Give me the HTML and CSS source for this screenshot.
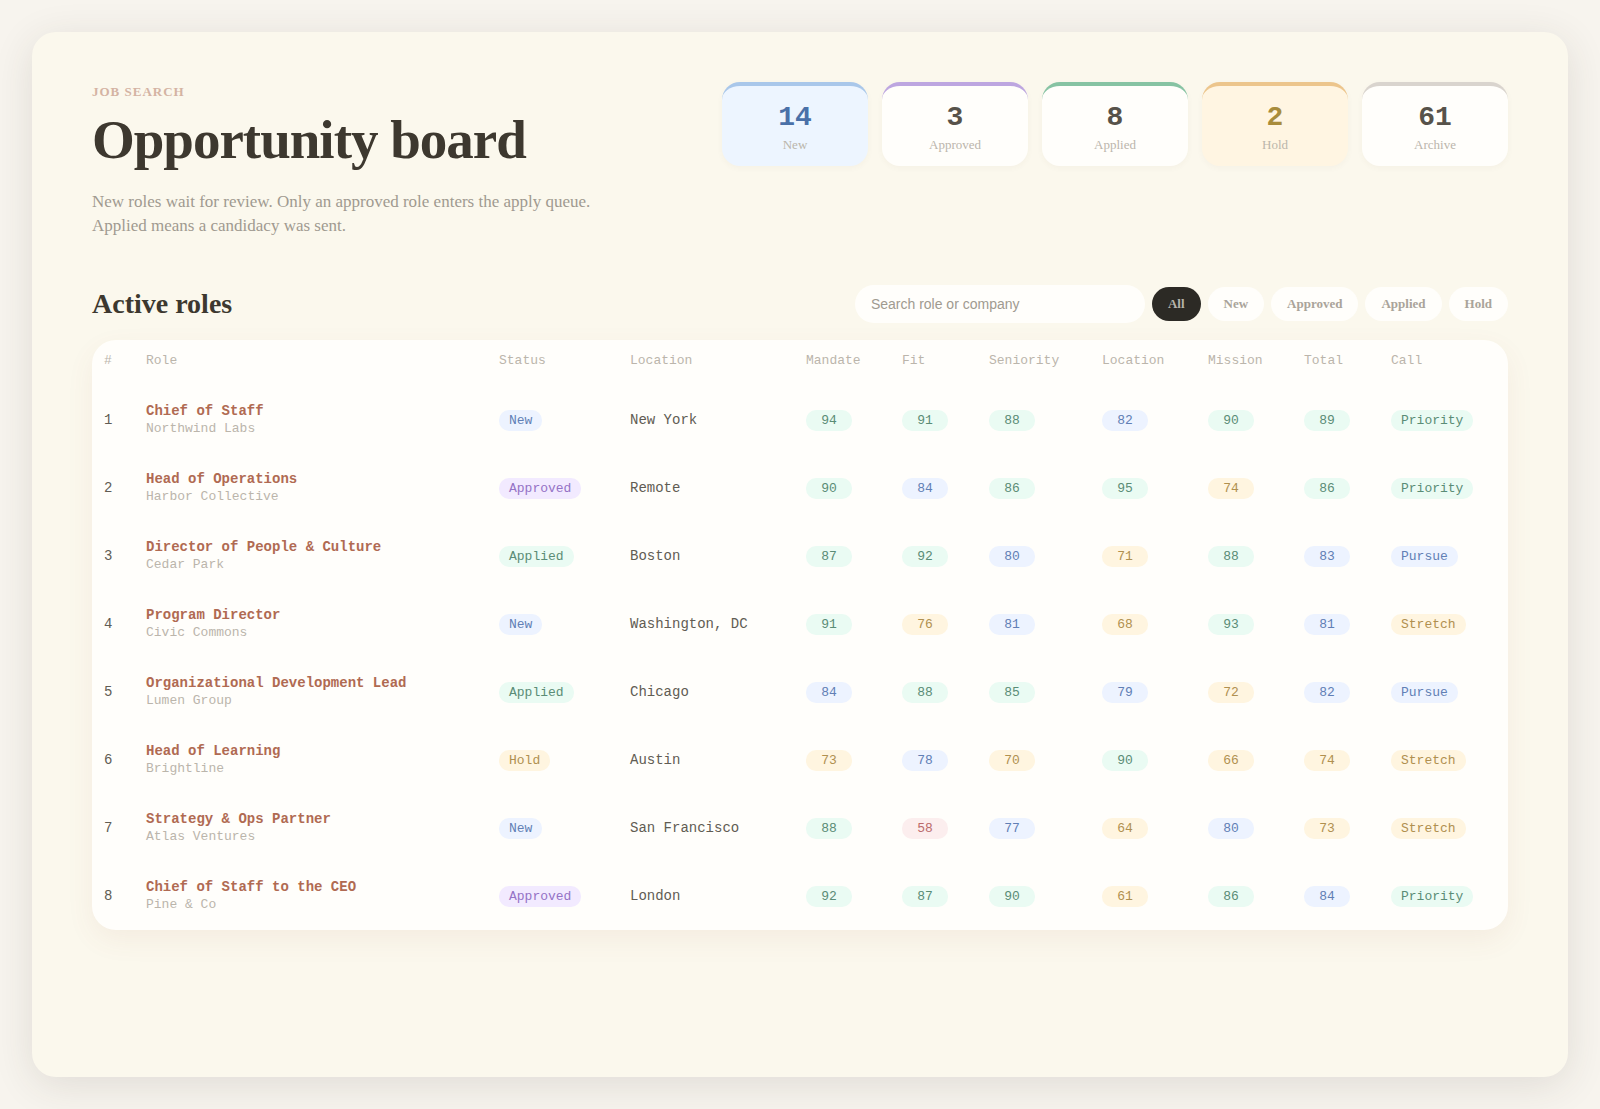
FILE: index.html
```
<!DOCTYPE html>
<html lang="en">
<head>
    <meta charset="UTF-8">
    <meta name="viewport" content="width=device-width, initial-scale=1.0">
    <title>Opportunity board</title>
    <link rel="stylesheet" href="styles.css">
</head>
<body>
    <main class="board">
        <header class="board-header">
            <div class="intro">
                <p class="eyebrow">Job search</p>
                <h1>Opportunity board</h1>
                <p class="lead">New roles wait for review. Only an approved role enters the apply queue. Applied means a candidacy was sent.</p>
            </div>
            <div class="stats">
                <div class="stat stat-new"><strong>14</strong><span>New</span></div>
                <div class="stat stat-approved"><strong>3</strong><span>Approved</span></div>
                <div class="stat stat-applied"><strong>8</strong><span>Applied</span></div>
                <div class="stat stat-hold"><strong>2</strong><span>Hold</span></div>
                <div class="stat stat-archive"><strong>61</strong><span>Archive</span></div>
            </div>
        </header>

        <section class="roles">
            <div class="toolbar">
                <h2>Active roles</h2>
                <div class="filters">
                    <input type="search" class="search" placeholder="Search role or company" aria-label="Search role or company">
                    <button type="button" class="filter active">All</button>
                    <button type="button" class="filter">New</button>
                    <button type="button" class="filter">Approved</button>
                    <button type="button" class="filter">Applied</button>
                    <button type="button" class="filter">Hold</button>
                </div>
            </div>

            <div class="table-card">
                <table>
                    <colgroup>
                        <col class="col-num">
                        <col class="col-role">
                        <col class="col-status">
                        <col class="col-place">
                        <col class="col-score">
                        <col class="col-fit">
                        <col class="col-seniority">
                        <col class="col-location">
                        <col class="col-score">
                        <col class="col-fit">
                        <col class="col-call">
                    </colgroup>
                    <thead>
                        <tr>
                            <th>#</th>
                            <th>Role</th>
                            <th>Status</th>
                            <th>Location</th>
                            <th>Mandate</th>
                            <th>Fit</th>
                            <th>Seniority</th>
                            <th>Location</th>
                            <th>Mission</th>
                            <th>Total</th>
                            <th>Call</th>
                        </tr>
                    </thead>
                    <tbody>
                        <tr>
                            <td>1</td>
                            <td><a href="#">Chief of Staff</a><small>Northwind Labs</small></td>
                            <td><span class="pill blue">New</span></td>
                            <td>New York</td>
                            <td><span class="pill score green">94</span></td>
                            <td><span class="pill score green">91</span></td>
                            <td><span class="pill score green">88</span></td>
                            <td><span class="pill score blue">82</span></td>
                            <td><span class="pill score green">90</span></td>
                            <td><span class="pill score green">89</span></td>
                            <td><span class="pill green">Priority</span></td>
                        </tr>
                        <tr>
                            <td>2</td>
                            <td><a href="#">Head of Operations</a><small>Harbor Collective</small></td>
                            <td><span class="pill purple">Approved</span></td>
                            <td>Remote</td>
                            <td><span class="pill score green">90</span></td>
                            <td><span class="pill score blue">84</span></td>
                            <td><span class="pill score green">86</span></td>
                            <td><span class="pill score green">95</span></td>
                            <td><span class="pill score amber">74</span></td>
                            <td><span class="pill score green">86</span></td>
                            <td><span class="pill green">Priority</span></td>
                        </tr>
                        <tr>
                            <td>3</td>
                            <td><a href="#">Director of People &amp; Culture</a><small>Cedar Park</small></td>
                            <td><span class="pill green">Applied</span></td>
                            <td>Boston</td>
                            <td><span class="pill score green">87</span></td>
                            <td><span class="pill score green">92</span></td>
                            <td><span class="pill score blue">80</span></td>
                            <td><span class="pill score amber">71</span></td>
                            <td><span class="pill score green">88</span></td>
                            <td><span class="pill score blue">83</span></td>
                            <td><span class="pill blue">Pursue</span></td>
                        </tr>
                        <tr>
                            <td>4</td>
                            <td><a href="#">Program Director</a><small>Civic Commons</small></td>
                            <td><span class="pill blue">New</span></td>
                            <td>Washington, DC</td>
                            <td><span class="pill score green">91</span></td>
                            <td><span class="pill score amber">76</span></td>
                            <td><span class="pill score blue">81</span></td>
                            <td><span class="pill score amber">68</span></td>
                            <td><span class="pill score green">93</span></td>
                            <td><span class="pill score blue">81</span></td>
                            <td><span class="pill amber">Stretch</span></td>
                        </tr>
                        <tr>
                            <td>5</td>
                            <td><a href="#">Organizational Development Lead</a><small>Lumen Group</small></td>
                            <td><span class="pill green">Applied</span></td>
                            <td>Chicago</td>
                            <td><span class="pill score blue">84</span></td>
                            <td><span class="pill score green">88</span></td>
                            <td><span class="pill score green">85</span></td>
                            <td><span class="pill score blue">79</span></td>
                            <td><span class="pill score amber">72</span></td>
                            <td><span class="pill score blue">82</span></td>
                            <td><span class="pill blue">Pursue</span></td>
                        </tr>
                        <tr>
                            <td>6</td>
                            <td><a href="#">Head of Learning</a><small>Brightline</small></td>
                            <td><span class="pill amber">Hold</span></td>
                            <td>Austin</td>
                            <td><span class="pill score amber">73</span></td>
                            <td><span class="pill score blue">78</span></td>
                            <td><span class="pill score amber">70</span></td>
                            <td><span class="pill score green">90</span></td>
                            <td><span class="pill score amber">66</span></td>
                            <td><span class="pill score amber">74</span></td>
                            <td><span class="pill amber">Stretch</span></td>
                        </tr>
                        <tr>
                            <td>7</td>
                            <td><a href="#">Strategy &amp; Ops Partner</a><small>Atlas Ventures</small></td>
                            <td><span class="pill blue">New</span></td>
                            <td>San Francisco</td>
                            <td><span class="pill score green">88</span></td>
                            <td><span class="pill score red">58</span></td>
                            <td><span class="pill score blue">77</span></td>
                            <td><span class="pill score amber">64</span></td>
                            <td><span class="pill score blue">80</span></td>
                            <td><span class="pill score amber">73</span></td>
                            <td><span class="pill amber">Stretch</span></td>
                        </tr>
                        <tr>
                            <td>8</td>
                            <td><a href="#">Chief of Staff to the CEO</a><small>Pine &amp; Co</small></td>
                            <td><span class="pill purple">Approved</span></td>
                            <td>London</td>
                            <td><span class="pill score green">92</span></td>
                            <td><span class="pill score green">87</span></td>
                            <td><span class="pill score green">90</span></td>
                            <td><span class="pill score amber">61</span></td>
                            <td><span class="pill score green">86</span></td>
                            <td><span class="pill score blue">84</span></td>
                            <td><span class="pill green">Priority</span></td>
                        </tr>
                    </tbody>
                </table>
            </div>
        </section>
    </main>
</body>
</html>
```
FILE: styles.css
```
:root {
    --page: #f7f4ee;
    --board: #fbf8ed;
    --card: #fffefb;
    --ink: #3d382f;
    --muted: #a09a90;
    --faint: #bbb5ab;
    --accent: #b06a52;
    --serif: "Liberation Serif", "Times New Roman", serif;
    --mono: "Liberation Mono", "Courier New", monospace;
}

* {
    margin: 0;
    padding: 0;
    box-sizing: border-box;
}

body {
    min-height: 100vh;
    display: flex;
    padding: 32px;
    background: var(--page);
    color: var(--ink);
    font-family: var(--serif);
}

.board {
    flex: 1;
    min-width: 0;
    padding: 50px 60px;
    background: var(--board);
    border-radius: 24px;
    box-shadow: 0 8px 40px rgba(60, 52, 44, 0.12);
}

.board-header {
    display: flex;
    justify-content: space-between;
    align-items: flex-start;
    gap: 40px;
}

.intro {
    max-width: 520px;
}

.eyebrow {
    font-size: 13px;
    font-weight: 600;
    line-height: 20px;
    letter-spacing: 1px;
    text-transform: uppercase;
    color: #d4b3a3;
}

h1 {
    margin-top: 8px;
    font-size: 55px;
    line-height: 60px;
    letter-spacing: -1px;
}

.lead {
    margin-top: 20px;
    font-size: 17px;
    line-height: 24px;
    color: var(--muted);
}

.stats {
    display: flex;
    gap: 14px;
}

.stat {
    width: 146px;
    padding: 16px 12px 13px;
    display: flex;
    flex-direction: column;
    align-items: center;
    gap: 3px;
    background: var(--card);
    border-top: 4px solid #d9d4ce;
    border-radius: 18px;
    box-shadow: 0 2px 6px rgba(90, 70, 40, 0.04);
}

.stat strong {
    font-family: var(--mono);
    font-size: 28px;
    line-height: 32px;
    color: #57524a;
}

.stat span {
    font-size: 13px;
    line-height: 16px;
    color: var(--faint);
}

.stat-new { background: #edf5ff; border-color: #a9c7ea; }
.stat-new strong { color: #4a70a8; }
.stat-approved { border-color: #bda6e0; }
.stat-applied { border-color: #86c3a3; }
.stat-hold { background: #fff5e2; border-color: #ecc58c; }
.stat-hold strong { color: #a88c3c; }

.roles {
    margin-top: 46px;
}

.toolbar {
    display: flex;
    justify-content: space-between;
    align-items: center;
}

h2 {
    font-size: 28px;
    line-height: 40px;
}

.filters {
    display: flex;
    align-items: center;
    gap: 7px;
}

.search {
    width: 290px;
    height: 38px;
    padding: 0 16px;
    border: none;
    border-radius: 20px;
    background: var(--card);
    font-family: "Liberation Sans", Arial, sans-serif;
    font-size: 14px;
    color: var(--ink);
}

.search::placeholder {
    color: var(--muted);
}

.filter {
    padding: 9px 16px;
    border: none;
    border-radius: 18px;
    background: var(--card);
    font-family: inherit;
    font-size: 13px;
    font-weight: 600;
    line-height: 16px;
    color: #aaa49a;
    cursor: pointer;
}

.filter.active {
    background: #2c2a25;
    color: #b5b2aa;
}

.table-card {
    margin-top: 16px;
    background: var(--card);
    border-radius: 24px;
    box-shadow: 0 10px 28px rgba(150, 90, 70, 0.07);
    overflow: hidden;
}

table {
    width: 100%;
    table-layout: fixed;
    border-collapse: collapse;
    font-family: var(--mono);
    font-size: 14px;
    line-height: 17px;
    text-align: left;
}

.col-num { width: 42px; }
.col-status { width: 131px; }
.col-place { width: 176px; }
.col-score { width: 96px; }
.col-fit { width: 87px; }
.col-seniority { width: 113px; }
.col-location { width: 106px; }
.col-call { width: 129px; }

th {
    padding: 12px 12px 17px;
    font-size: 13px;
    font-weight: 400;
    color: var(--faint);
}

td {
    padding: 17px 12px;
    color: #615c53;
}

td a {
    display: block;
    font-weight: 700;
    color: var(--accent);
    text-decoration: none;
}

td small {
    display: block;
    font-size: 13px;
    color: var(--faint);
}

.pill {
    display: inline-block;
    padding: 2px 10px;
    border-radius: 10px;
    font-size: 13px;
    text-align: center;
}

.score {
    min-width: 46px;
}

.green { background: #eafbf3; color: #5a8c76; }
.blue { background: #edf3ff; color: #617fb5; }
.amber { background: #fff5e0; color: #b0904f; }
.purple { background: #f2eaff; color: #9573c6; }
.red { background: #fceeee; color: #bb6b6b; }
```
